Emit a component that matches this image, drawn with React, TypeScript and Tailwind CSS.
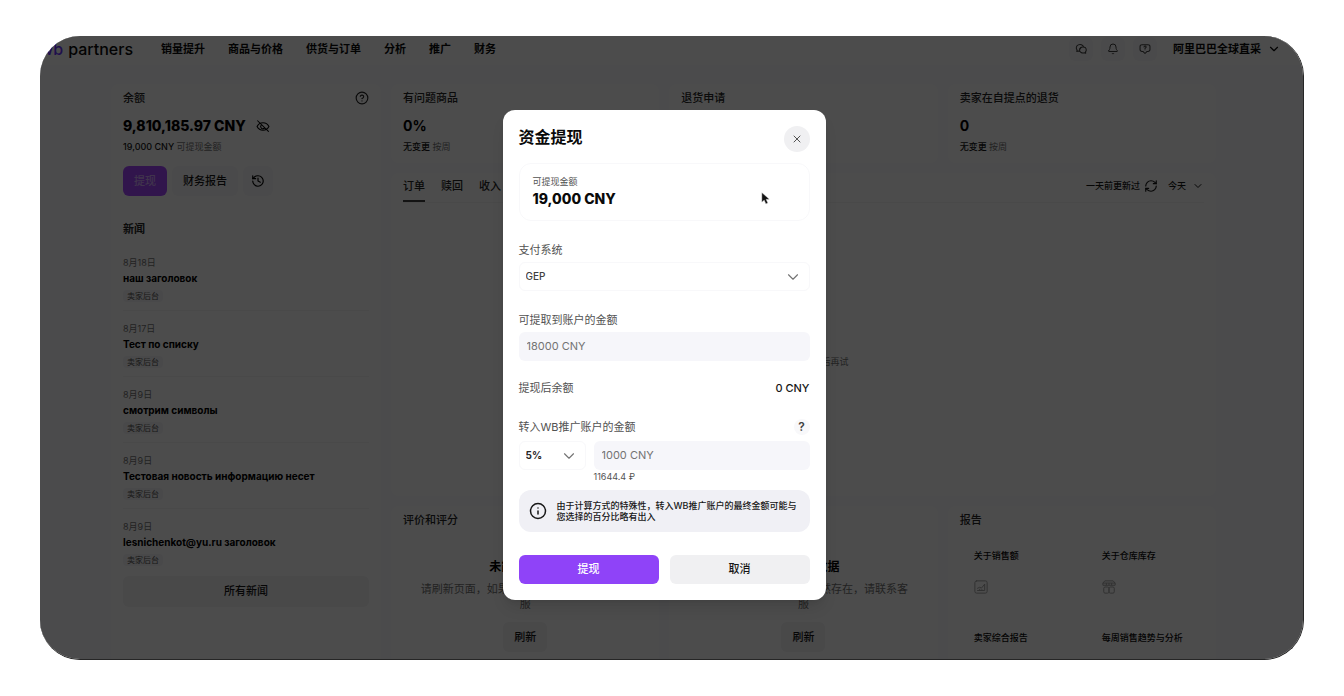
import React, { useState } from 'react';
import { Bell, ChevronDown, CircleHelp, History, Info, RefreshCw, X } from 'lucide-react';

const navItems = ['销量提升', '商品与价格', '供货与订单', '分析', '推广', '财务'];

const news = [
  { date: '8月18日', title: 'наш заголовок' },
  { date: '8月17日', title: 'Тест по списку' },
  { date: '8月9日', title: 'смотрим символы' },
  { date: '8月9日', title: 'Тестовая новость информацию несет' },
  { date: '8月9日', title: 'lesnichenkot@yu.ru заголовок' },
];

const stats = [
  { label: '有问题商品', value: '0%' },
  { label: '退货申请', value: '0' },
  { label: '卖家在自提点的退货', value: '0' },
];

const reports = [
  { label: '关于销售额', icon: 'chart' },
  { label: '关于仓库库存', icon: 'boxes' },
  { label: '卖家综合报告', icon: 'chart' },
  { label: '每周销售趋势与分析', icon: 'chart' },
];

const ChatIcon: React.FC = () => (
  <svg viewBox="0 0 16 16" className="w-3 h-3" fill="none" stroke="currentColor" strokeWidth="1.4" strokeLinejoin="round">
    <path d="M11.500 5.200A5 4.600 0 1 0 2.800 9.400L2.400 11.200l2.400-.6c.6.200 1.200.3 1.800.3" />
    <path d="M6 9.400a4.500 4 0 0 1 9-.2 4 4 0 0 1-1 2.600l.3 1.700-2-.6A4.500 4 0 0 1 6 9.400Z" />
    <path d="M6.200 8.500 8.500 5.500" />
  </svg>
);

const SupportIcon: React.FC = () => (
  <svg viewBox="0 0 16 16" className="w-3 h-3" fill="none" stroke="currentColor" strokeWidth="1.4" strokeLinecap="round" strokeLinejoin="round">
    <path d="M4 2.2h8A2.6 2.6 0 0 1 14.6 4.8V8.600a2.600 2.600 0 0 1-2.600 2.600H10.800L8 14 5.200 11.200H4A2.600 2.600 0 0 1 1.400 8.600V4.800A2.600 2.600 0 0 1 4 2.200Z" />
    <path d="M6.700 5.300a1.400 1.400 0 1 1 1.900 1.400c-.4.200-.6.300-.6.700M8 9v.1" />
  </svg>
);

const HiddenEyeIcon: React.FC = () => (
  <svg viewBox="0 0 16 16" className="w-3.5 h-3.5" fill="none" stroke="currentColor" strokeWidth="1.2" strokeLinecap="round">
    <path d="M1.200 8.500C2.600 5.800 5 4.200 8 4.200s5.400 1.600 6.800 4.300C13.400 11.200 11 12.800 8 12.800s-5.400-1.600-6.800-4.300Z" />
    <path d="M5.800 7.200a2.500 2.500 0 0 0 3.600 3.400M1.800 2l12.400 12.200" />
  </svg>
);

const ReportIcon: React.FC<{ type: string }> = ({ type }) =>
  type === 'boxes' ? (
    <svg viewBox="0 0 16 16" className="w-3.5 h-3.5" fill="none" stroke="currentColor" strokeWidth="1.1" strokeLinejoin="round">
      <path d="M3.200 1h9.600L15 3.500V6H1V3.500L3.200 1ZM1 3.500h14" />
      <path d="M5 6V3.500M8 6V3.500M11 6V3.500" />
      <rect x="2" y="8" width="6" height="7" rx="1.5" />
      <rect x="8" y="8" width="6" height="7" rx="1.5" />
    </svg>
  ) : (
    <svg viewBox="0 0 16 16" className="w-3.5 h-3.5" fill="none" stroke="currentColor" strokeWidth="1.1" strokeLinecap="round">
      <rect x="1" y="1" width="14" height="14" rx="2" />
      <path d="M4 12h8.200V5M4 9.500l2.500-1.200 2 1L12 5M6.500 12v-1.500M9 12v-1" />
    </svg>
  );

const TopBar: React.FC = () => (
  <header className="flex h-[29px] shrink-0 items-center bg-white pr-[22px] pb-[3px] whitespace-nowrap">
    <a href="#home" className="mr-7 text-base leading-4 font-medium text-neutral-950">
      <span className="mr-[5px] text-[#6a35ff]">wb</span>
      partners
    </a>
    <nav className="flex gap-[23px] text-[11px] leading-4 font-bold text-neutral-950">
      {navItems.map((item) => (
        <a key={item} href="#nav">{item}</a>
      ))}
    </nav>
    <div className="ml-auto flex items-center gap-2 text-neutral-700">
      <button aria-label="消息" className="flex h-6 w-6 items-center justify-center rounded-md bg-[#f9f9fb]">
        <ChatIcon />
      </button>
      <button aria-label="通知" className="flex h-6 w-6 items-center justify-center rounded-md bg-[#f9f9fb]">
        <Bell className="h-3 w-3" />
      </button>
      <button aria-label="支持" className="flex h-6 w-6 items-center justify-center rounded-md bg-[#f9f9fb]">
        <SupportIcon />
      </button>
      <button className="ml-2 flex items-center gap-1.5 text-[11px] leading-4 font-bold text-neutral-950">
        阿里巴巴全球直采
        <ChevronDown className="h-3.5 w-3.5" />
      </button>
    </div>
  </header>
);

const Sidebar: React.FC = () => (
  <aside className="flex flex-col rounded-lg bg-white px-3 py-1.5">
    <div className="flex items-center justify-between text-[11px] leading-4 font-medium text-neutral-800">
      余额
      <CircleHelp className="h-3.5 w-3.5" />
    </div>
    <div className="mt-2.5 flex items-center gap-2.5 text-sm leading-5 font-extrabold text-black">
      9,810,185.97 CNY
      <HiddenEyeIcon />
    </div>
    <p className="mt-[5px] text-[9px] leading-3 font-medium text-neutral-900">
      19,000 CNY <span className="font-normal text-neutral-500">可提现金额</span>
    </p>
    <div className="mt-[13px] flex gap-[5px] text-[11px] font-medium">
      <button className="h-[30px] w-11 rounded-md bg-[#a548ff] text-[#d8b0ff]">提现</button>
      <button className="h-[30px] w-[66px] rounded-md bg-[#f9f9fb] text-neutral-900">财务报告</button>
      <button aria-label="历史" className="flex h-[30px] w-[30px] items-center justify-center rounded-md bg-[#f9f9fb]">
        <History className="h-3.5 w-3.5" />
      </button>
    </div>
    <h2 className="mt-[25px] text-[11px] leading-4 font-bold text-neutral-800">新闻</h2>
    <ul className="mt-2">
      {news.map((item) => (
        <li key={item.title} className="h-[66px] border-b border-neutral-100 pt-3 last:border-0">
          <p className="text-[9px] leading-3 text-neutral-500">{item.date}</p>
          <a href="#news" className="mt-0.5 block text-[10px] leading-3.5 font-bold whitespace-nowrap text-black">{item.title}</a>
          <span className="mt-[5px] block w-10 rounded bg-[#f5f5f7] px-1 text-[8px] leading-3 whitespace-nowrap text-neutral-600">卖家后台</span>
        </li>
      ))}
    </ul>
    <button className="mt-px h-[31px] rounded-md bg-[#f3f3f5] text-[11px] font-medium text-neutral-900">所有新闻</button>
  </aside>
);

const OrdersPanel: React.FC = () => {
  const [activeTab, setActiveTab] = useState('订单');

  return (
    <section className="col-span-3 flex flex-col rounded-lg bg-white px-3 pt-[5px]">
      <div className="flex items-start justify-between border-b border-neutral-100">
        <div className="flex gap-4 text-[11px] leading-4 font-medium text-neutral-800">
          {['订单', '赎回', '收入'].map((tab) => (
            <button
              key={tab}
              onClick={() => setActiveTab(tab)}
              className={`pb-1.5 border-b-2 ${activeTab === tab ? 'border-neutral-700' : 'border-transparent'}`}
            >
              {tab}
            </button>
          ))}
        </div>
        <div className="flex items-center text-[9px] leading-4 font-medium text-neutral-900">
          一天前更新过
          <RefreshCw className="ml-1 h-3.5 w-3.5" />
          <button className="ml-2.5 flex items-center gap-1.5">
            今天
            <ChevronDown className="h-3 w-3" />
          </button>
        </div>
      </div>
      <p className="m-auto pt-6 text-[9px] leading-3 text-neutral-500">加载失败，请稍后再试</p>
    </section>
  );
};

const ErrorCard: React.FC<{ title?: string }> = ({ title }) => (
  <section className="flex flex-col items-center rounded-lg bg-white px-3 pt-1.5">
    <h2 className="h-4 self-start text-[11px] leading-4 font-medium text-neutral-800">{title}</h2>
    <p className="mt-[31px] text-xs leading-4 font-bold text-black">未能加载数据</p>
    <p className="mt-[7px] max-w-[216px] text-center text-[11px] leading-[15px] text-neutral-500">
      请刷新页面，如果问题仍然存在，请联系客服
    </p>
    <button className="mt-2.5 h-[30px] w-11 rounded-md bg-[#f3f3f5] text-[11px] font-medium text-neutral-900">刷新</button>
  </section>
);

const Dashboard: React.FC = () => (
  <main className="grid grow grid-cols-[270px_1fr] gap-2.5 bg-[#fbfbfd] pt-[19px] pr-[87px] pl-[71px]">
    <Sidebar />
    <div className="grid grid-cols-3 grid-rows-[79px_323px_auto] gap-2.5">
      {stats.map((stat) => (
        <section key={stat.label} className="rounded-lg bg-white px-3 py-1.5">
          <h2 className="text-[11px] leading-4 font-medium text-neutral-800">{stat.label}</h2>
          <p className="mt-2.5 text-sm leading-5 font-bold text-black">{stat.value}</p>
          <p className="mt-[5px] text-[9px] leading-3 font-medium text-neutral-900">
            无变更 <span className="font-normal text-neutral-500">按周</span>
          </p>
        </section>
      ))}
      <OrdersPanel />
      <ErrorCard title="评价和评分" />
      <ErrorCard />
      <section className="rounded-lg bg-white px-3 pt-1.5">
        <h2 className="text-[11px] leading-4 font-medium text-neutral-800">报告</h2>
        <div className="mt-2.5 grid grid-cols-2 gap-x-3 gap-y-3.5">
          {reports.map((report) => (
            <a key={report.label} href="#report" className="rounded-lg px-3.5 py-3 text-[9px] leading-3 font-medium whitespace-nowrap text-neutral-950">
              {report.label}
              <span className="mt-[18px] block text-neutral-400">
                <ReportIcon type={report.icon} />
              </span>
            </a>
          ))}
        </div>
      </section>
    </div>
  </main>
);

const WithdrawDialog: React.FC = () => {
  const [system, setSystem] = useState('GEP');
  const [percent, setPercent] = useState('5%');

  return (
    <div role="dialog" aria-labelledby="withdraw-title" className="w-[323px] rounded-xl bg-white p-4 text-[11px] leading-4 text-neutral-600 shadow-lg">
      <div className="flex h-[26px] items-center justify-between">
        <h1 id="withdraw-title" className="mb-1 text-base leading-[22px] font-bold text-neutral-950">资金提现</h1>
        <button aria-label="关闭" className="flex h-[26px] w-[26px] items-center justify-center rounded-full bg-[#f0f0f2] text-neutral-600">
          <X className="h-3 w-3" />
        </button>
      </div>

      <div className="relative mt-[11px] h-[58px] rounded-xl border border-[#f8f8fa] px-[13px] pt-3">
        <p className="text-[9px] leading-3 text-neutral-600">可提现金额</p>
        <p className="mt-px text-sm leading-5 font-extrabold text-neutral-950">19,000 CNY</p>
        <svg viewBox="0 0 12 18" className="absolute top-7 right-[39px] h-[13px] w-[9px]">
          <path d="M1 1v13l3.200-2.800 2.300 5.200 2.600-1.100-2.300-5.100 4.400-.3L1 1Z" fill="#111" stroke="#bbb" strokeWidth=".6" />
        </svg>
      </div>

      <label htmlFor="system" className="mt-[21px] block">支付系统</label>
      <div className="relative mt-1">
        <select
          id="system"
          value={system}
          onChange={(e) => setSystem(e.target.value)}
          className="h-[29px] w-full appearance-none rounded-md border border-[#f8f8fa] bg-white px-1.5 text-[10px] font-medium text-neutral-700"
        >
          <option>GEP</option>
        </select>
        <ChevronDown className="pointer-events-none absolute top-1.5 right-2 h-[18px] w-[18px] stroke-[1.5] text-neutral-500" />
      </div>

      <label htmlFor="amount" className="mt-[21px] block">可提取到账户的金额</label>
      <input id="amount" readOnly value="18000 CNY" className="mt-1 block h-[29px] w-full rounded-md bg-[#f6f6fa] px-2 text-[11px] text-neutral-500" />

      <div className="mt-[19px] flex justify-between">
        提现后余额
        <span className="text-[11px] font-medium text-neutral-900">0 CNY</span>
      </div>

      <div className="mt-[21px] flex h-5 items-center justify-between">
        <label htmlFor="promo">转入WB推广账户的金额</label>
        <button aria-label="帮助" className="h-4 w-4 rounded-full bg-[#f8f8fa] text-xs leading-4 font-semibold text-neutral-700">?</button>
      </div>
      <div className="mt-1 flex gap-2">
        <div className="relative w-[67px]">
          <select
            aria-label="百分比"
            value={percent}
            onChange={(e) => setPercent(e.target.value)}
            className="h-[29px] w-full appearance-none rounded-md border border-[#f8f8fa] bg-white px-1.5 text-[10px] font-bold text-neutral-800"
          >
            <option>5%</option>
            <option>10%</option>
          </select>
          <ChevronDown className="pointer-events-none absolute top-1.5 right-2 h-[18px] w-[18px] stroke-[1.5] text-neutral-500" />
        </div>
        <div className="min-w-0 grow">
          <input id="promo" readOnly value="1000 CNY" className="block h-[29px] w-full rounded-md bg-[#f6f6fa] px-2 text-[11px] text-neutral-500" />
          <p className="mt-px text-[9px] leading-3 text-neutral-600">11644.4 ₽</p>
        </div>
      </div>

      <div className="mt-[7px] flex h-[42px] items-center gap-2.5 rounded-xl bg-[#f0f0f5] pr-3 pl-2.5 text-neutral-900">
        <Info className="h-[18px] w-[18px] shrink-0" />
        <p className="text-[9px] leading-[11px] font-medium">由于计算方式的特殊性，转入WB推广账户的最终金额可能与您选择的百分比略有出入</p>
      </div>

      <div className="mt-[23px] grid grid-cols-2 gap-[11px] text-[11px] font-medium">
        <button className="h-[29px] rounded-md bg-[#8f43f8] text-white">提现</button>
        <button className="h-[29px] rounded-md bg-[#f0f0f2] text-neutral-900">取消</button>
      </div>
    </div>
  );
};

export default function App() {
  return (
    <div className="h-screen bg-white px-10 py-9 font-['Inter','Noto_Sans_CJK_SC',sans-serif]">
      <div className="relative h-full overflow-hidden rounded-[40px] border-r border-b border-neutral-800 bg-[#4b4b4b]">
        <div className="flex h-full flex-col overflow-hidden">
          <TopBar />
          <Dashboard />
        </div>
        <div className="absolute inset-0 flex items-center justify-center bg-black/70 pt-[14px] pr-[15px]">
          <WithdrawDialog />
        </div>
      </div>
    </div>
  );
}
